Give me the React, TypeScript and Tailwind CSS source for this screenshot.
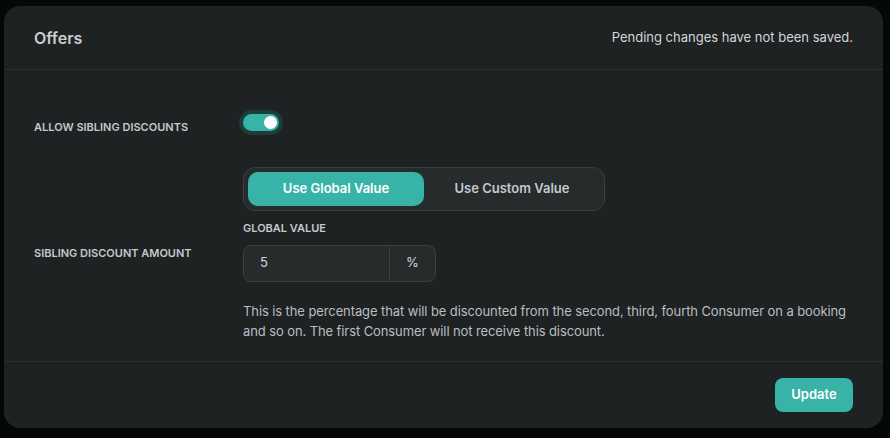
import { useState } from "react";

export default function App() {
  const [allowSibling, setAllowSibling] = useState(true);
  const [mode, setMode] = useState<"global" | "custom">("global");

  return (
    <div
      className="min-h-screen w-full bg-[#040808] pl-1 pr-[7px] pt-1.5 pb-[10px]"
      style={{ fontFamily: "Inter, 'Noto Sans', sans-serif" }}
    >
      <div className="flex flex-col overflow-hidden rounded-2xl bg-[#1e2223] text-[#c4c9cb]">
        {/* header */}
        <div className="flex h-16 items-center justify-between border-b border-[#2c3132] px-[30px]">
          <h2 className="text-base font-semibold text-[#c9ced0]">Offers</h2>
          <span className="text-[13px] text-[#d2d6d8]">Pending changes have not been saved.</span>
        </div>

        {/* body */}
        <div className="flex flex-col gap-6 border-b border-[#2c3132] px-[30px] pt-8 pb-5">
          <div className="flex h-10 items-center">
            <label className="mt-2.5 w-[209px] shrink-0 text-[11px] font-semibold uppercase text-[#c4c9cb]">
              Allow sibling discounts
            </label>
            <button
              onClick={() => setAllowSibling(!allowSibling)}
              className="-ml-1 flex h-[25px] w-11 shrink-0 items-center rounded-full bg-[#1d3d3a] p-1"
            >
              <span
                className={`flex h-[17px] w-9 items-center rounded-full px-[2px] ${
                  allowSibling ? "justify-end bg-[#38b3a8]" : "justify-start bg-[#3a3f40]"
                }`}
              >
                <span className="h-[13px] w-[13px] rounded-full bg-white" />
              </span>
            </button>
          </div>

          <div className="flex items-center">
            <label className="w-[209px] shrink-0 text-[11px] font-semibold uppercase text-[#c4c9cb]">
              Sibling discount amount
            </label>
            <div className="mt-px flex min-w-0 flex-col">
              <div className="flex h-11 w-[362px] items-center rounded-xl border border-[#3a3f40] bg-[#262b2c] p-1">
                <button
                  onClick={() => setMode("global")}
                  className={`h-[34px] w-[176px] rounded-[10px] text-[13px] font-semibold ${
                    mode === "global" ? "bg-[#38b3a8] text-white" : "text-[#c4c9cb]"
                  }`}
                >
                  Use Global Value
                </button>
                <button
                  onClick={() => setMode("custom")}
                  className={`h-[34px] flex-1 rounded-[10px] text-[13px] font-semibold ${
                    mode === "custom" ? "bg-[#38b3a8] text-white" : "text-[#c4c9cb]"
                  }`}
                >
                  Use Custom Value
                </button>
              </div>
              <span className="mt-[9px] text-[11px] font-semibold uppercase text-[#c4c9cb]">
                Global value
              </span>
              <div className="mt-[8px] flex h-[37px] w-[193px] rounded-lg border border-[#3a3f40] bg-[#262b2c] text-[13px] text-[#d2d6d8]">
                <input
                  defaultValue="5"
                  className="w-[146px] border-r border-[#3a3f40] bg-transparent px-4 outline-none"
                />
                <span className="flex flex-1 items-center justify-center">%</span>
              </div>
              <p className="mt-[19px] w-[620px] text-[13px] leading-5 tracking-[-0.1px] text-[#b9bec0]">
                This is the percentage that will be discounted from the second, third, fourth Consumer on a booking
                and so on. The first Consumer will not receive this discount.
              </p>
            </div>
          </div>
        </div>

        {/* footer */}
        <div className="flex h-[66px] items-center justify-end px-[30px]">
          <button className="h-[34px] w-[78px] rounded-lg bg-[#38b3a8] pt-px text-[13px] font-semibold text-white">
            Update
          </button>
        </div>
      </div>
    </div>
  );
}
